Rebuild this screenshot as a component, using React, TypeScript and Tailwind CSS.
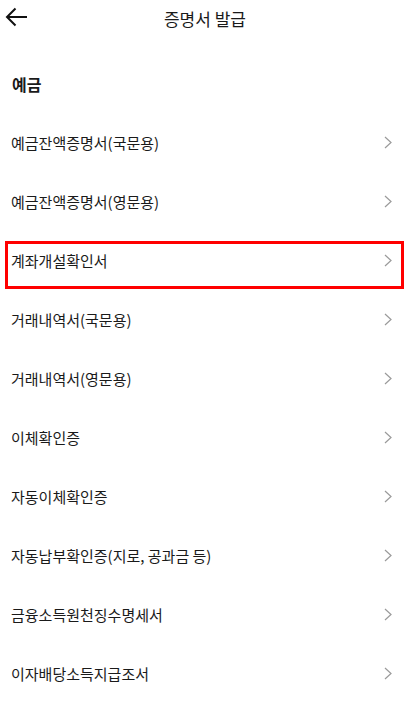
import React from 'react';

const items = [
  '예금잔액증명서(국문용)',
  '예금잔액증명서(영문용)',
  '계좌개설확인서',
  '거래내역서(국문용)',
  '거래내역서(영문용)',
  '이체확인증',
  '자동이체확인증',
  '자동납부확인증(지로, 공과금 등)',
  '금융소득원천징수명세서',
  '이자배당소득지급조서',
];

const font = { fontFamily: '"Noto Sans CJK KR", "Noto Sans", sans-serif' };

function Chevron() {
  return (
    <svg width="8" height="13" viewBox="0 0 8 13" fill="none" className="shrink-0">
      <path d="M1 1l6 5.5L1 12" stroke="#9a9a9a" strokeWidth="1.2" />
    </svg>
  );
}

export default function App() {
  return (
    <div className="w-[410px] h-[704px] bg-white overflow-hidden text-[#1a1a1a]" style={font}>
      {/* Header */}
      <div className="relative h-[36px] flex items-center justify-center">
        <button className="absolute left-[5px] top-[7px]">
          <svg width="23" height="20" viewBox="0 0 23 20" fill="none">
            <path d="M22 10H2M10.5 1.5L2 10l8.5 8.5" stroke="#111" strokeWidth="2" />
          </svg>
        </button>
        <h1 className="text-[17px] leading-none">증명서 발급</h1>
      </div>

      {/* Section */}
      <div className="pl-[12px] pt-[40px] h-[77px]">
        <h2 className="text-[16px] font-bold leading-none">예금</h2>
      </div>

      {/* List */}
      <ul>
        {items.map((item, i) => (
          <li key={item} className="relative h-[59px] flex items-center justify-between pl-[11px] pr-[18px]">
            <span className="text-[15px] leading-none">{item}</span>
            <Chevron />
            {i === 2 && (
              <div className="absolute left-[5px] right-[6px] top-[10px] h-[48px] border-[3px] border-[#ff0000] pointer-events-none" />
            )}
          </li>
        ))}
      </ul>
    </div>
  );
}
